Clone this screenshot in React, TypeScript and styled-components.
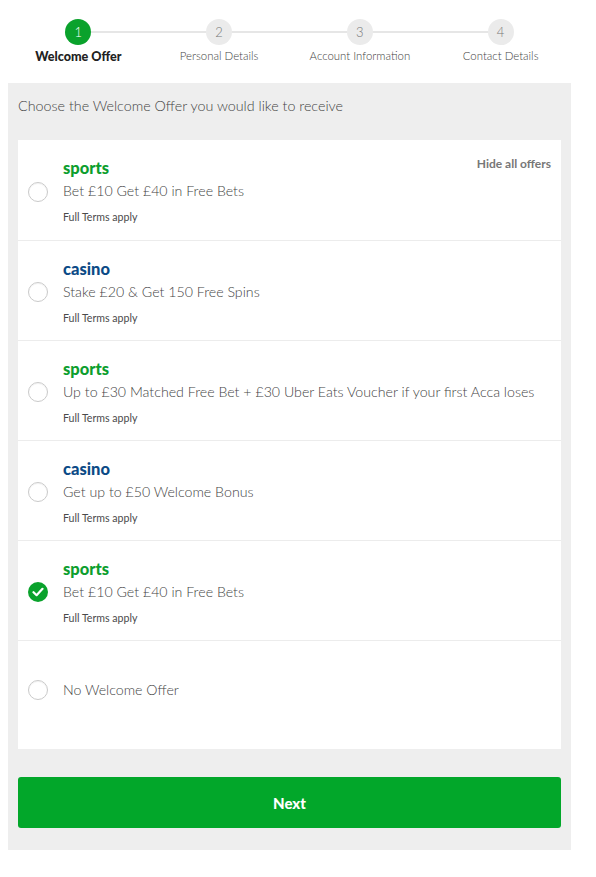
import React, { useState } from 'react'
import styled, { createGlobalStyle } from 'styled-components'

const GlobalStyle = createGlobalStyle`
  html, body {
    margin: 0;
    padding: 0;
    background: #fff;
  }
  body {
    font-family: Lato, 'Open Sans', sans-serif;
    color: #444;
  }
`

const Page = styled.div`
  padding: 19px 25px 20px 8px;
`

const Stepper = styled.ol`
  list-style: none;
  margin: 0;
  padding: 0;
  display: grid;
  grid-template-columns: repeat(4, 1fr);
  height: 64px;
`

const Step = styled.li<{ $first?: boolean; $last?: boolean }>`
  position: relative;
  display: flex;
  flex-direction: column;
  align-items: center;

  &::before,
  &::after {
    content: '';
    position: absolute;
    top: 12px;
    height: 2px;
    background: #e6e6e6;
  }
  &::before {
    left: 0;
    right: 50%;
    display: ${p => (p.$first ? 'none' : 'block')};
  }
  &::after {
    left: 50%;
    right: 0;
    display: ${p => (p.$last ? 'none' : 'block')};
  }
`

const StepDot = styled.span<{ $active?: boolean }>`
  position: relative;
  z-index: 1;
  width: 26px;
  height: 26px;
  border-radius: 50%;
  display: flex;
  align-items: center;
  justify-content: center;
  font-size: 13px;
  font-weight: 300;
  background: ${p => (p.$active ? '#0aa22c' : '#ebebeb')};
  color: ${p => (p.$active ? '#fff' : '#777')};
`

const StepLabel = styled.span<{ $active?: boolean }>`
  margin-top: 4px;
  font-size: ${p => (p.$active ? '12.6px' : '11.4px')};
  font-weight: ${p => (p.$active ? 900 : 300)};
  color: ${p => (p.$active ? '#222' : '#444')};
  white-space: nowrap;
`

const Panel = styled.section`
  background: #eeeeee;
  padding: 14px 10px 22px;
`

const Intro = styled.p`
  margin: 0 0 26px;
  font-size: 14.3px;
  font-weight: 300;
  color: #444;
`

const Card = styled.div`
  background: #fff;
`

const Offer = styled.label<{ $tall?: boolean }>`
  position: relative;
  display: flex;
  align-items: center;
  gap: 15px;
  padding: ${p => (p.$tall ? '0 10px 10px' : '3px 10px 0')};
  height: ${p => (p.$tall ? '109px' : '100px')};
  box-sizing: border-box;
  cursor: pointer;

  & + & {
    border-top: 1px solid #ececec;
  }
`

const Radio = styled.span<{ $checked?: boolean }>`
  flex: none;
  width: 20px;
  height: 20px;
  border-radius: 50%;
  box-sizing: border-box;
  border: ${p => (p.$checked ? 'none' : '1px solid #cacaca')};
  box-shadow: ${p => (p.$checked ? 'none' : 'inset 0 1px 1px rgba(0,0,0,0.05)')};
  background: ${p => (p.$checked ? '#0aa22c' : '#fff')};
  display: flex;
  align-items: center;
  justify-content: center;
`

const OfferBody = styled.div`
  display: flex;
  flex-direction: column;
`

const Category = styled.span<{ $kind: 'sports' | 'casino' }>`
  font-size: 16.5px;
  font-weight: 900;
  line-height: 18px;
  color: ${p => (p.$kind === 'sports' ? '#0d9e2e' : '#0b4a86')};
`

const Title = styled.span<{ $plain?: boolean }>`
  margin-top: ${p => (p.$plain ? '0' : '5px')};
  font-size: 14.2px;
  font-weight: 300;
  line-height: 18px;
  color: #444;
`

const Terms = styled.span`
  margin-top: 10px;
  font-size: 10.6px;
  font-weight: 400;
  line-height: 14px;
  color: #4a4a4a;
`

const HideAll = styled.button`
  position: absolute;
  top: 16px;
  right: 10px;
  border: 0;
  padding: 0;
  background: none;
  font-family: inherit;
  font-size: 12px;
  font-weight: 700;
  color: #777;
  cursor: pointer;
`

const NextButton = styled.button`
  display: block;
  width: 100%;
  height: 51px;
  margin-top: 28px;
  border: 0;
  border-radius: 3px;
  background: #02a72a;
  color: #fff;
  font-family: inherit;
  font-size: 15px;
  font-weight: 900;
  cursor: pointer;
`

type OfferItem = { kind?: 'sports' | 'casino'; title: string }

const offers: OfferItem[] = [
  { kind: 'sports', title: 'Bet £10 Get £40 in Free Bets' },
  { kind: 'casino', title: 'Stake £20 & Get 150 Free Spins' },
  { kind: 'sports', title: 'Up to £30 Matched Free Bet + £30 Uber Eats Voucher if your first Acca loses' },
  { kind: 'casino', title: 'Get up to £50 Welcome Bonus' },
  { kind: 'sports', title: 'Bet £10 Get £40 in Free Bets' },
  { title: 'No Welcome Offer' },
]

const steps = ['Welcome Offer', 'Personal Details', 'Account Information', 'Contact Details']

const Check = () => (
  <svg width="12" height="10" viewBox="0 0 12 10" fill="none">
    <path d="M1.5 5.2 4.6 8.2 10.5 1.8" stroke="#fff" strokeWidth="2.2" strokeLinecap="round" strokeLinejoin="round" />
  </svg>
)

export default function App() {
  const [selected, setSelected] = useState(4)

  return (
    <>
      <GlobalStyle />
      <Page>
        <Stepper>
          {steps.map((s, i) => (
            <Step key={s} $first={i === 0} $last={i === steps.length - 1}>
              <StepDot $active={i === 0}>{i + 1}</StepDot>
              <StepLabel $active={i === 0}>{s}</StepLabel>
            </Step>
          ))}
        </Stepper>
        <Panel>
          <Intro>Choose the Welcome Offer you would like to receive</Intro>
          <Card>
            {offers.map((o, i) => (
              <Offer key={i} $tall={!o.kind} onClick={() => setSelected(i)}>
                <Radio $checked={selected === i}>{selected === i && <Check />}</Radio>
                <OfferBody>
                  {o.kind && <Category $kind={o.kind}>{o.kind}</Category>}
                  <Title $plain={!o.kind}>{o.title}</Title>
                  {o.kind && <Terms>Full Terms apply</Terms>}
                </OfferBody>
                {i === 0 && <HideAll type="button">Hide all offers</HideAll>}
              </Offer>
            ))}
          </Card>
          <NextButton type="button">Next</NextButton>
        </Panel>
      </Page>
    </>
  )
}
